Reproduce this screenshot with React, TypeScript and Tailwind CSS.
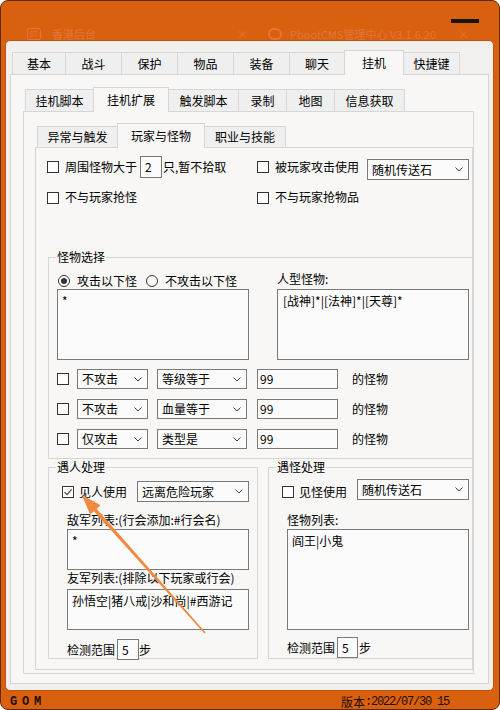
import clsx from 'clsx';
import type { ReactNode } from 'react';

const CJK = "font-['Noto_Sans_CJK_SC','Noto_Sans',sans-serif]";
const MONO = "font-['Liberation_Mono',monospace]";
const PANEL = 'bg-[#f8f7f6]';

type TabDef = { label: string; w: string; active?: boolean };

const TOP_TABS: TabDef[] = [
  { label: '基本', w: 'w-[54px]' },
  { label: '战斗', w: 'w-[57px]' },
  { label: '保护', w: 'w-[57px]' },
  { label: '物品', w: 'w-[57px]' },
  { label: '装备', w: 'w-[57px]' },
  { label: '聊天', w: 'w-[56px]' },
  { label: '挂机', w: 'w-[60px]', active: true },
  { label: '快捷键', w: 'w-[57px]' },
];

const MID_TABS: TabDef[] = [
  { label: '挂机脚本', w: 'w-[69px]' },
  { label: '挂机扩展', w: 'w-[76px]', active: true },
  { label: '触发脚本', w: 'w-[71px]' },
  { label: '录制', w: 'w-[49px]' },
  { label: '地图', w: 'w-[49px]' },
  { label: '信息获取', w: 'w-[71px]' },
];

const SUB_TABS: TabDef[] = [
  { label: '异常与触发', w: 'w-[81px]' },
  { label: '玩家与怪物', w: 'w-[88px]', active: true },
  { label: '职业与技能', w: 'w-[82px]' },
];

const FILTERS = [
  { act: '不攻击', rule: '等级等于' },
  { act: '不攻击', rule: '血量等于' },
  { act: '仅攻击', rule: '类型是' },
];

function TabRow({ tabs, low = 'h-[23px]', className }: { tabs: TabDef[]; low?: string; className?: string }) {
  return (
    <div className={clsx('relative z-10 -mb-px flex h-[25px] items-end', className)}>
      {tabs.map((t, i) => (
        <div
          key={t.label}
          className={clsx(
            'flex shrink-0 items-center justify-center border border-[#d6d6d6] text-[12px] leading-none',
            i > 0 && '-ml-px',
            t.w,
            t.active ? clsx('relative z-10 h-[25px] border-b-0 pb-[1px]', PANEL) : clsx(low, 'bg-[#efefef]')
          )}
        >
          {t.label}
        </div>
      ))}
    </div>
  );
}

function Check({ on, className }: { on?: boolean; className?: string }) {
  return (
    <span className={clsx('flex h-[12px] w-[12px] shrink-0 items-center justify-center border border-[#333] bg-[#fdfdfd]', className)}>
      {on && (
        <svg width="10" height="10" viewBox="0 0 10 10">
          <path d="M1.5 5.2 L4 7.6 L8.6 2.4" fill="none" stroke="#444" strokeWidth="1.1" />
        </svg>
      )}
    </span>
  );
}

function Radio({ on, className }: { on?: boolean; className?: string }) {
  return (
    <span className={clsx('flex h-[12px] w-[12px] shrink-0 items-center justify-center rounded-full border border-[#333] bg-[#fdfdfd]', className)}>
      {on && <span className="h-[6px] w-[6px] rounded-full bg-[#333]" />}
    </span>
  );
}

function Drop({ value, w, h = 'h-[20px]', className }: { value: string; w: string; h?: string; className?: string }) {
  return (
    <div className={clsx('flex shrink-0 items-center justify-between border border-[#7a7a7a] bg-[#fbfbfb] pl-[4px] pr-[5px] text-[12px]', w, h, className)}>
      <span className="leading-none">{value}</span>
      <svg width="8" height="5" viewBox="0 0 8 5">
        <path d="M0.5 0.5 L4 4 L7.5 0.5" fill="none" stroke="#444" />
      </svg>
    </div>
  );
}

function Field({ value, w, h = 'h-[20px]', className }: { value: string; w: string; h?: string; className?: string }) {
  return (
    <div className={clsx('flex shrink-0 items-center border border-[#7a7a7a] bg-[#fbfbfb] pl-[2px] text-[12px] leading-none', w, h, className)}>
      {value}
    </div>
  );
}

function Memo({ w, h, className, children }: { w: string; h: string; className?: string; children: ReactNode }) {
  return (
    <div className={clsx('shrink-0 border border-[#7a7a7a] bg-[#fbfbfb] pl-[4px] pt-[2px] text-[12px] leading-[18px]', w, h, className)}>
      {children}
    </div>
  );
}

function Group({ title, className, children }: { title: string; className?: string; children: ReactNode }) {
  return (
    <div className={clsx('relative shrink-0 border border-[#d6d6d6]', className)}>
      <span className={clsx('absolute -top-[9px] left-[7px] px-px text-[12px] leading-[16px]', PANEL)}>{title}</span>
      {children}
    </div>
  );
}

export default function App() {
  return (
    <div className={clsx('relative flex h-[710px] w-[500px] flex-col overflow-hidden rounded-[8px] border border-[#5b2c0c] bg-[#d9600f] text-[12px] text-black', CJK)}>
      {/* title bar */}
      <div className="flex h-[39px] shrink-0 flex-col">
        <div className="mt-[18px] flex justify-end pr-[20px]">
          <div className="h-[4px] w-[28px] bg-[#151515]" />
        </div>
        {/* faint windows showing through */}
        <div className="mt-[5px] flex h-[12px] items-center whitespace-nowrap text-[11px] leading-[12px] text-[#e2763a]">
          <span className="ml-[26px] flex h-[12px] w-[14px] items-center justify-center rounded-[2px] border border-[#e2763a] text-[7px] leading-none">BT</span>
          <span className="ml-[11px]">香港后台</span>
          <span className="ml-[141px]">×</span>
          <span className="ml-[20px] h-[12px] w-[14px] rounded-full border-2 border-[#e2763a]" />
          <span className="ml-[8px]">PbootCMS管理中心 V3.1.6.20</span>
          <span className="ml-[22px]">×</span>
        </div>
      </div>

      {/* dialog */}
      <div className="ml-[4px] h-[651px] w-[489px] shrink-0 rounded-[5px] border border-[#bf540d] bg-[#f1f0ef]">
        <TabRow tabs={TOP_TABS} className="ml-[6px] mt-[9px]" />
        <div className={clsx('ml-[4px] h-[610px] w-[479px] border border-[#d6d6d6]', PANEL)}>
          <TabRow tabs={MID_TABS} className="ml-[14px] mt-[12px]" />
          <div className={clsx('ml-[12px] h-[563px] w-[451px] border border-[#d6d6d6]', PANEL)}>
            <TabRow tabs={SUB_TABS} low="h-[22px]" className="ml-[13px] mt-[11px]" />
            <div className={clsx('ml-[11px] h-[523px] w-[438px] border border-[#d6d6d6]', PANEL)}>
              {/* top options */}
              <div className="mt-[8px] flex h-[24px] items-start">
                <div className="ml-[11px] flex w-[210px] items-start">
                  <Check className="mt-[5px]" />
                  <span className="ml-[6px] leading-[22px]">周围怪物大于</span>
                  <Field value="2" w="w-[22px]" h="h-[22px]" className="ml-[3px] pl-[4px]" />
                  <span className="ml-[1px] leading-[22px]">只,暂不拾取</span>
                </div>
                <div className="flex items-start">
                  <Check className="mt-[5px]" />
                  <span className="ml-[6px] leading-[22px]">被玩家攻击使用</span>
                  <Drop value="随机传送石" w="w-[102px]" h="h-[21px]" className="ml-[8px] mt-[3px]" />
                </div>
              </div>
              <div className="mt-[6px] flex h-[22px] items-start">
                <div className="ml-[11px] flex w-[210px] items-start">
                  <Check className="mt-[6px]" />
                  <span className="ml-[6px] leading-[22px]">不与玩家抢怪</span>
                </div>
                <div className="flex items-start">
                  <Check className="mt-[6px]" />
                  <span className="ml-[6px] leading-[22px]">不与玩家抢物品</span>
                </div>
              </div>

              {/* monster selection */}
              <Group title="怪物选择" className="ml-[12px] mt-[49px] h-[202px] w-[424px] border-r-0">
                <div className="mt-[14px] flex">
                  <div className="ml-[8px] flex w-[220px] flex-col">
                    <div className="flex h-[17px] items-center">
                      <Radio on className="ml-[1px]" />
                      <span className="ml-[7px] leading-none">攻击以下怪</span>
                      <Radio className="ml-[9px]" />
                      <span className="ml-[7px] leading-none">不攻击以下怪</span>
                    </div>
                    <Memo w="w-[192px]" h="h-[71px]">*</Memo>
                  </div>
                  <div className="flex flex-col">
                    <div className="h-[17px] leading-[14px]">人型怪物:</div>
                    <Memo w="w-[192px]" h="h-[71px]" className="pl-[5px]">[战神]*|[法神]*|[天尊]*</Memo>
                  </div>
                </div>
                <div className="ml-[8px] mt-[9px] flex flex-col gap-[10px]">
                  {FILTERS.map((f) => (
                    <div key={f.rule} className="flex h-[20px] items-center">
                      <Check />
                      <Drop value={f.act} w="w-[71px]" className="ml-[8px]" />
                      <Drop value={f.rule} w="w-[90px]" className="ml-[9px]" />
                      <Field value="99" w="w-[81px]" className="ml-[10px]" />
                      <span className="ml-[14px] leading-none">的怪物</span>
                    </div>
                  ))}
                </div>
              </Group>

              <div className="mt-[8px] flex">
                {/* players */}
                <Group title="遇人处理" className="ml-[12px] h-[192px] w-[210px]">
                  <div className="ml-[13px] mt-[13px] flex h-[21px] items-center">
                    <Check on />
                    <span className="ml-[5px] leading-none">见人使用</span>
                    <Drop value="远离危险玩家" w="w-[112px]" h="h-[21px]" className="ml-[10px]" />
                  </div>
                  <div className="ml-[18px] mt-[10px] leading-[16px]">敌军列表:(行会添加:#行会名)</div>
                  <Memo w="w-[182px]" h="h-[41px]" className="ml-[18px] mt-[1px]">*</Memo>
                  <div className="ml-[18px] leading-[16px]">友军列表:(排除以下玩家或行会)</div>
                  <Memo w="w-[182px]" h="h-[41px]" className="ml-[18px] mt-[3px]">孙悟空|猪八戒|沙和尚|#西游记</Memo>
                  <div className="ml-[18px] mt-[9px] flex h-[21px] items-center">
                    <span className="leading-none">检测范围</span>
                    <Field value="5" w="w-[22px]" h="h-[21px]" className="ml-[2px] pl-[4px]" />
                    <span className="leading-none">步</span>
                  </div>
                </Group>

                {/* monsters */}
                <Group title="遇怪处理" className="ml-[10px] h-[192px] w-[204px] border-r-0">
                  <div className="ml-[13px] mt-[13px] flex h-[21px] items-center">
                    <Check />
                    <span className="ml-[5px] leading-none">见怪使用</span>
                    <Drop value="随机传送石" w="w-[112px]" h="h-[21px]" className="-mt-[4px] ml-[10px]" />
                  </div>
                  <div className="ml-[18px] mt-[10px] leading-[16px]">怪物列表:</div>
                  <Memo w="w-[182px]" h="h-[101px]" className="ml-[18px] mt-[1px]">阎王|小鬼</Memo>
                  <div className="ml-[18px] mt-[7px] flex h-[21px] items-center">
                    <span className="leading-none">检测范围</span>
                    <Field value="5" w="w-[21px]" h="h-[21px]" className="ml-[2px] pl-[4px]" />
                    <span className="ml-[1px] leading-none">步</span>
                  </div>
                </Group>
              </div>
            </div>
          </div>
        </div>
      </div>

      {/* footer */}
      <div className="flex flex-1 items-center pl-[9px] pt-[4px] text-[#1a0f06]">
        <span className={clsx('whitespace-pre text-[12px] font-bold leading-none tracking-[-1.2px]', MONO)}>G O M</span>
        <span className="ml-[301px] flex items-center leading-none">
          <span className="text-[12px]">版本</span>
          <span className={clsx('whitespace-pre text-[12px] tracking-[-1.2px]', MONO)}>:2022/07/30 15</span>
        </span>
      </div>

      {/* annotation arrow */}
      <svg className="pointer-events-none absolute left-[-1px] top-[-1px]" width="500" height="710" viewBox="0 0 500 710">
        <polygon points="82,495 100.5,505.2 96.6,508.7 205.6,632.5 204.4,633.5 93.9,511.2 90.1,514.6" fill="#f08a40" />
      </svg>
    </div>
  );
}
